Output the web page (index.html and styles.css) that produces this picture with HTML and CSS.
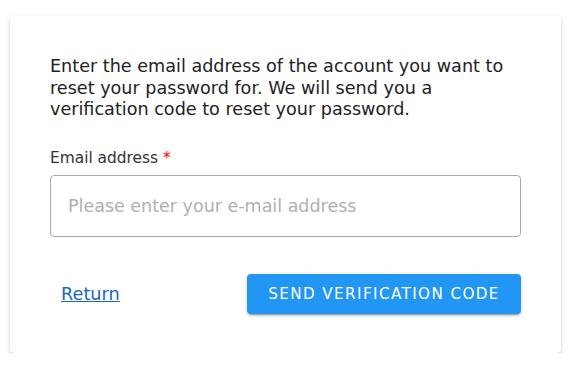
FILE: index.html
```html
<!DOCTYPE html>
<html>
<head>
<meta charset="utf-8" />
<title>Reset password</title>
<link rel="stylesheet" href="styles.css">
</head>
<body>
	<div id="main">
		<div class="card">
			<p class="intro">Enter the email address of the account you want to reset your password for. We will send you a verification code to reset your password.</p>
			<label class="field_label" for="email">Email address <span class="req">*</span></label>
			<input id="email" class="field_input" type="text" placeholder="Please enter your e-mail address" />
			<div class="actions">
				<a class="back_link" href="#">Return</a>
				<button class="send_btn">Send verification code</button>
			</div>
		</div>
	</div>
</body>
</html>
```

FILE: styles.css
```css
* {
    margin: 0;
    padding: 0;
    box-sizing: border-box;
}

body {
    background-color: #fff;
    font-family: "DejaVu Sans", Verdana, sans-serif;
    color: #222;
}

#main {
    padding: 16px 13px 0 10px;
}

.card {
    width: 551px;
    padding: 40px 40px 39px 40px;
    background-color: #fff;
    border-radius: 4px;
    box-shadow: 0 3px 1px -2px rgba(0, 0, 0, .2), 0 2px 2px 0 rgba(0, 0, 0, .14), 0 1px 5px 0 rgba(0, 0, 0, .12);
}

.intro {
    font-size: 17.6px;
    line-height: 21.5px;
    color: #222;
}

.field_label {
    display: block;
    margin-top: 27.5px;
    font-size: 15.4px;
    line-height: 20px;
    color: #333;
}

.req {
    color: #f00;
}

.field_input {
    display: block;
    width: 100%;
    height: 62px;
    margin-top: 7px;
    padding: 0 17px;
    border: 1px solid #aaa;
    border-radius: 4px;
    font-family: "DejaVu Sans", Verdana, sans-serif;
    font-size: 17.5px;
    color: #222;
    outline: none;
}

.field_input::placeholder {
    color: #b0b0b0;
}

.actions {
    display: flex;
    justify-content: space-between;
    align-items: center;
    margin-top: 37px;
}

.back_link {
    margin-left: 11px;
    font-size: 17.7px;
    color: #1867c0;
    text-decoration: underline;
}

.send_btn {
    width: 274px;
    height: 40px;
    border: none;
    border-radius: 4px;
    background-color: #2196f3;
    color: #fff;
    font-family: "DejaVu Sans", Verdana, sans-serif;
    font-size: 15.2px;
    letter-spacing: 1.4px;
    text-transform: uppercase;
    box-shadow: 0 3px 1px -2px rgba(0, 0, 0, .2), 0 2px 2px 0 rgba(0, 0, 0, .14), 0 1px 5px 0 rgba(0, 0, 0, .12);
}
```
